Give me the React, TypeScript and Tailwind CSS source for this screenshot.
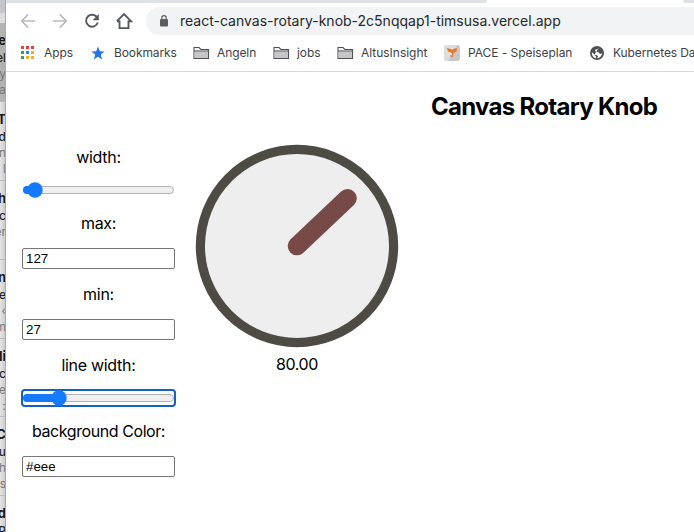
import React from "react";

const messages = [
  ["ce", "el", "y", "ha"],
  ["T", "d", "on", "t l"],
  ["sh", "ac", "er", ""],
  ["n", "Ge", "t ‹", "m"],
  ["li", "ec", "e", "u :"],
  ["'C", "u", "ch", "rs"],
  ["d", "P", "", ""],
];

function MailStrip() {
  return (
    <div className="flex h-full w-[6px] shrink-0 flex-col overflow-hidden border-r border-[#aaaaaa] bg-gradient-to-r from-[#e5e5e5] to-[#cccccc]">
      <div className="h-[13px] shrink-0 bg-[#c5c6c9]" />
      <div className="h-[10px] shrink-0 bg-[#dddddd]" />
      {messages.map((m, i) => (
        <div
          key={i}
          className={`flex h-[78.9px] shrink-0 flex-col items-end border-b border-[#bcbcbc] pt-[8px] whitespace-nowrap ${i === 0 ? "bg-[#b2b2b2]" : ""}`}
        >
          <b className="-mr-px text-[13px] leading-[18px] text-[#171717]">{m[0]}</b>
          <span className="-mr-px h-[17px] text-[12px] font-medium leading-[17px] text-[#222222]">{m[1]}</span>
          <span className="-mr-px h-[16px] text-[12px] leading-[16px] text-[#777777]">{m[2]}</span>
          <span className="-mr-px h-[15px] text-[12px] leading-[15px] text-[#777777]">{m[3]}</span>
        </div>
      ))}
    </div>
  );
}

function Toolbar() {
  return (
    <div className="flex h-[32px] items-center">
      <svg className="h-[32px] w-[140px] shrink-0" viewBox="6 5 140 32" fill="none" strokeWidth="1.7">
        <g stroke="#b9babb">
          <path d="M35 21H22M28.2 14.3 21.7 21l6.5 6.7" />
          <path d="M53 21h13M59.8 14.3l6.5 6.7-6.5 6.7" />
        </g>
        <path d="M97.2 17.6A6 6 0 1 0 97.8 22.5" stroke="#55585c" strokeWidth="1.9" />
        <path d="M98.8 14v6.2h-6.2z" fill="#55585c" />
        <path d="M119.5 20.5v7.6h9v-7.6M117 21.2l7-7 7 7h-2.5M117 21.2h2.5" stroke="#55585c" strokeWidth="1.9" />
      </svg>
      <div className="flex h-[28px] flex-1 items-center rounded-l-full bg-[#f1f3f4] pl-[13px]">
        <svg className="h-[14px] w-[10px]" viewBox="0 0 10 14">
          <rect x="1" y="5" width="8" height="7.5" rx="1" fill="#5b5e61" />
          <path d="M2.8 5.5V3.8a2.2 2.2 0 0 1 4.4 0v1.7" fill="none" stroke="#5b5e61" strokeWidth="1.2" />
        </svg>
        <span className="ml-[11px] pb-[2px] whitespace-nowrap text-[14px] text-[#26282b]">react-canvas-rotary-knob-2c5nqqap1-timsusa.vercel.app</span>
      </div>
    </div>
  );
}

function Folder() {
  return (
    <svg className="h-[14px] w-[17px]" viewBox="0 0 17 14">
      <path d="M1 12.5V1.5h5l2 2h7.5v9z" fill="#f5f5f5" stroke="#4f5154" strokeWidth="1.1" />
      <path d="M1.5 5.5H15v6.5H1.5z" fill="#c6c6c6" />
      <path d="M1 5h14.5" stroke="#4f5154" />
    </svg>
  );
}

const appColors = ["#ea4335", "#ea4335", "#ea4335", "#34a05a", "#2684f0", "#f9ae22", "#34a05a", "#f9ae22", "#f9ae22"];

function Bookmark({ icon, label, left, iconWidth, textWidth, tracking }: { icon: React.ReactNode; label: string; left: string; iconWidth: string; textWidth: string; tracking: string }) {
  return (
    <div className={`flex shrink-0 items-center ${left}`}>
      <div className={`flex shrink-0 items-center ${iconWidth}`}>{icon}</div>
      <span className={`block whitespace-nowrap ${textWidth} ${tracking}`}>{label}</span>
    </div>
  );
}

function BookmarksBar() {
  return (
    <div className="flex h-[35px] items-center overflow-hidden border-b border-[#d6d8da] pb-[3px] text-[12px] text-[#3e4246]">
      <Bookmark
        left="ml-[15px]" iconWidth="w-[23px]" textWidth="w-[29px]" tracking="tracking-[-0.1px]" label="Apps"
        icon={
          <svg className="h-[13px] w-[13px]" viewBox="0 0 13 13">
            {appColors.map((c, i) => (
              <rect key={i} x={(i % 3) * 5} y={Math.floor(i / 3) * 5} width="3" height="3" fill={c} />
            ))}
          </svg>
        }
      />
      <Bookmark
        left="ml-[18px]" iconWidth="w-[23px]" textWidth="w-[63px]" tracking="tracking-[-0.1px]" label="Bookmarks"
        icon={
          <svg className="h-[14px] w-[14px]" viewBox="0 0 14 14">
            <path d="m7 .5 1.8 4.7 4.8.3-3.8 3.1 1.3 4.9L7 10.8l-4.1 2.7 1.3-4.9L.4 5.5l4.8-.3z" fill="#2374e8" />
          </svg>
        }
      />
      <Bookmark left="ml-[16px]" iconWidth="w-[24px]" textWidth="w-[40px]" tracking="tracking-[-0.1px]" label="Angeln" icon={<Folder />} />
      <Bookmark left="ml-[16px]" iconWidth="w-[24px]" textWidth="w-[24px]" tracking="tracking-[-0.1px]" label="jobs" icon={<Folder />} />
      <Bookmark left="ml-[16px]" iconWidth="w-[24px]" textWidth="w-[67px]" tracking="tracking-[-0.02px]" label="AltusInsight" icon={<Folder />} />
      <Bookmark
        left="ml-[16px]" iconWidth="w-[24px]" textWidth="w-[105px]" tracking="tracking-[-0.05px]" label="PACE - Speiseplan"
        icon={
          <svg className="h-[16px] w-[16px]" viewBox="0 0 16 16">
            <rect width="16" height="16" rx="3" fill="#c8c8c8" />
            <path d="M0 3a3 3 0 0 1 3-3h10L4 16H3a3 3 0 0 1-3-3z" fill="#dedede" />
            <path d="m3 3 3 .8 2 1 2-1 3-.8-.5 3.5-3 1.5-.8 4.5L6 11l1-3.5-3-1z" fill="#ed7625" />
            <path d="m6 7.5 2 1.2-.5 2L5.5 9z" fill="#fff" />
          </svg>
        }
      />
      <Bookmark
        left="ml-[17px]" iconWidth="w-[23px]" textWidth="w-[90px]" tracking="tracking-[-0.1px]" label="Kubernetes Dashboard"
        icon={
          <svg className="h-[14px] w-[14px]" viewBox="0 0 14 14">
            <circle cx="7" cy="7" r="7" fill="#4d5156" />
            <path d="M8.8 1.7c-.6.1-1.2.7-.8 1.5-1.7-.2-2.8 0-2.8 1.5.2 1.6 3.5.5 3.9 2.3.2 1 1.1.8 3.1.5-.6 2.4-2.3 4.5-4.9 4.8-.4-.8 1-1.5.6-2.4-.9-1.2-3.2-.5-4-1.9L1.9 6.2c-.4 3 1.5 5.5 4 6.1l.1-2-1.8-1.2" fill="#fff" />
          </svg>
        }
      />
    </div>
  );
}

function Slider({ value, focused }: { value: number; focused?: boolean }) {
  return (
    <div className={`flex h-[18px] w-[155px] items-center rounded-[4px] border-2 ${focused ? "border-[#1460c8]" : "border-transparent"}`}>
      <svg className="h-[16px] w-[151px] shrink-0 overflow-visible" viewBox="0 0 151 16">
        <rect x=".5" y="4.5" width="150" height="7" rx="3.5" fill="#efefef" stroke="#b2b2b2" />
        <rect x="0" y="4" width={value} height="8" rx="4" fill="#147aff" />
        <circle cx={value} cy="8" r="7.7" fill="#147aff" />
      </svg>
    </div>
  );
}

function Field({ label, tracking, children }: { label: string; tracking: string; children: React.ReactNode }) {
  return (
    <div className="flex flex-col items-center">
      <label className={`h-[20px] whitespace-nowrap text-[16px] leading-[20px] ${tracking}`}>{label}</label>
      {children}
    </div>
  );
}

function TextBox({ value }: { value: string }) {
  return (
    <input
      className="mt-[15px] h-[21px] w-[153px] rounded-[2px] border border-[#767676] bg-white px-[3px] font-['Liberation_Sans',Arial,sans-serif] text-[13.33px] text-black"
      defaultValue={value}
    />
  );
}

function Controls() {
  return (
    <div className="flex w-[155px] flex-col items-center pt-[75px]">
      <Field label="width:" tracking="tracking-[-0.3px]">
        <div className="mt-[14px]"><Slider value={12} /></div>
      </Field>
      <div className="h-[14px]" />
      <Field label="max:" tracking="tracking-[-0.3px]"><TextBox value="127" /></Field>
      <div className="h-[15px]" />
      <Field label="min:" tracking="tracking-[-0.3px]"><TextBox value="27" /></Field>
      <div className="h-[15px]" />
      <Field label="line width:" tracking="tracking-[-0.3px]">
        <div className="mt-[14px]"><Slider value={36} focused /></div>
      </Field>
      <div className="h-[14px]" />
      <Field label="background Color:" tracking="tracking-[-0.42px]"><TextBox value="#eee" /></Field>
    </div>
  );
}

function Knob() {
  return (
    <div className="ml-[19px] flex w-[204px] flex-col items-center pt-[72px]">
      <svg className="h-[204px] w-[204px]" viewBox="0 0 204 204">
        <circle cx="102" cy="102" r="96.6" fill="#eee" stroke="#4e4b44" strokeWidth="9.2" />
        <path d="m102 102 50.5-47.7" stroke="#774a47" strokeWidth="18.6" strokeLinecap="round" />
      </svg>
      <span className="mt-[6px] h-[20px] text-[16px] leading-[20px] tracking-[-0.35px]">80.00</span>
    </div>
  );
}

export default function App() {
  return (
    <div className="flex h-[532px] w-[694px] overflow-hidden bg-white font-[Inter,'Liberation_Sans',sans-serif] text-black">
      <MailStrip />
      <div className="flex min-w-0 flex-1 flex-col">
        <div className="flex h-[5px] shrink-0 justify-between">
          <div className="h-[3px] w-[481px] rounded-br-[6px] bg-[#dee1e6]" />
          <div className="h-[3px] w-[11px] rounded-bl-[6px] bg-[#dee1e6]" />
        </div>
        <Toolbar />
        <BookmarksBar />
        <main className="flex pl-[15px]">
          <Controls />
          <Knob />
          <h1 className="ml-[32px] mt-[20px] h-[30px] whitespace-nowrap text-[24px] font-bold leading-[30px] tracking-[-0.7px]">Canvas Rotary Knob</h1>
        </main>
      </div>
    </div>
  );
}
